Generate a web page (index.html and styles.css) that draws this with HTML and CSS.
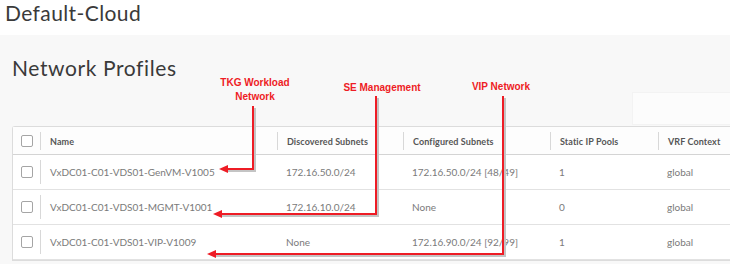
FILE: index.html
```html
<!DOCTYPE html>
<html lang="en">
<head>
    <meta charset="UTF-8">
    <title>Default-Cloud - Network Profiles</title>
    <link rel="stylesheet" href="styles.css">
</head>
<body>
    <div class="cloud-title">Default-Cloud</div>
    <div class="content">
        <div class="page-title">Network Profiles</div>
        <div class="toolbar">
            <div class="filter"></div>
        </div>
        <div class="grid">
            <div class="row head">
                <div class="cell check"><span class="box"></span></div>
                <div class="cell sep">Name</div>
                <div class="cell sep">Discovered Subnets</div>
                <div class="cell sep">Configured Subnets</div>
                <div class="cell sep">Static IP Pools</div>
                <div class="cell sep">VRF Context</div>
            </div>
            <div class="row">
                <div class="cell check"><span class="box"></span></div>
                <div class="cell sep">VxDC01-C01-VDS01-GenVM-V1005</div>
                <div class="cell">172.16.50.0/24</div>
                <div class="cell">172.16.50.0/24 [48/49]</div>
                <div class="cell">1</div>
                <div class="cell">global</div>
            </div>
            <div class="row">
                <div class="cell check"><span class="box"></span></div>
                <div class="cell sep">VxDC01-C01-VDS01-MGMT-V1001</div>
                <div class="cell">172.16.10.0/24</div>
                <div class="cell">None</div>
                <div class="cell">0</div>
                <div class="cell">global</div>
            </div>
            <div class="row">
                <div class="cell check"><span class="box"></span></div>
                <div class="cell sep">VxDC01-C01-VDS01-VIP-V1009</div>
                <div class="cell">None</div>
                <div class="cell">172.16.90.0/24 [92/99]</div>
                <div class="cell">1</div>
                <div class="cell">global</div>
            </div>
        </div>
    </div>

    <!-- red callouts drawn over the screenshot -->
    <svg class="callouts" width="730" height="264" viewBox="0 0 730 264">
        <g class="shadow" fill="none" stroke="#c4c4c4" stroke-width="2">
            <path d="M255 108 V171 H226"/>
            <path d="M378 98 V216 H220"/>
            <path d="M505 98 V256 H214"/>
        </g>
        <g fill="none" stroke="#ee1c25" stroke-width="2">
            <path d="M253 106 V169 H226"/>
            <path d="M376 96 V214 H220"/>
            <path d="M503 96 V254 H214"/>
        </g>
        <g fill="#ee1c25">
            <path d="M219 169 L228 165 L228 173 Z"/>
            <path d="M213 214 L222 210 L222 218 Z"/>
            <path d="M207 254 L216 250 L216 258 Z"/>
        </g>
        <g class="label" text-anchor="middle">
            <text x="255" y="86">TKG Workload</text>
            <text x="255" y="100">Network</text>
            <text x="382" y="91">SE Management</text>
            <text x="501" y="90">VIP Network</text>
        </g>
    </svg>
</body>
</html>
```

FILE: styles.css
```css
body {
    margin: 0;
    width: 730px;
    height: 264px;
    overflow: hidden;
    position: relative;
    font-family: Lato, "Open Sans", sans-serif;
    background: #fff;
}
.cloud-title {
    height: 35px;
    padding-left: 5px;
    font-size: 21px;
    line-height: 26px;
    letter-spacing: 0.4px;
    color: #3a3a3a;
}
.content {
    background: #f8f8f8;
    padding: 19px 0 0 12px;
    height: 210px;
    overflow: hidden;
}
.page-title {
    font-size: 21px;
    line-height: 28px;
    letter-spacing: 0.6px;
    color: #3a3a3a;
}
.toolbar {
    display: flex;
    justify-content: flex-end;
    height: 34px;
    margin-top: 10px;
}
.filter {
    width: 97px;
    height: 31px;
    background: #fcfcfc;
    border: 1px solid #f3f3f3;
    border-right: 0;
}
.grid {
    width: 718px;
    background: #fff;
    border: 1px solid #dcdcdc;
    border-right: 0;
    border-radius: 3px 0 0 0;
}
.row {
    display: grid;
    grid-template-columns: 27px 237px 126px 147px 108px 1fr;
    height: 34px;
    border-bottom: 1px solid #e2e2e2;
    font-size: 10px;
    color: #7a7a7a;
}
.row.head {
    height: 27px;
    border-bottom: 1px solid #d4d4d4;
    font-size: 9px;
    letter-spacing: 0.1px;
    font-weight: bold;
    color: #565656;
    background: #fdfdfd;
}
.cell {
    display: flex;
    align-items: center;
    padding: 0 9px;
    white-space: nowrap;
    margin: 5px 0;
}
.row.head .cell {
    margin: 5px 0 4px;
}
.sep {
    border-left: 1px solid #d8d8d8;
}
.check {
    padding: 0;
    justify-content: center;
}
.box {
    width: 10px;
    height: 10px;
    border: 1px solid #a5a5a5;
    border-radius: 2px;
    background: #fff;
}
.callouts {
    position: absolute;
    left: 0;
    top: 0;
}
.label text {
    font-family: "Liberation Sans", Arial, sans-serif;
    font-size: 10px;
    font-weight: bold;
    fill: #ee1c25;
}
```
